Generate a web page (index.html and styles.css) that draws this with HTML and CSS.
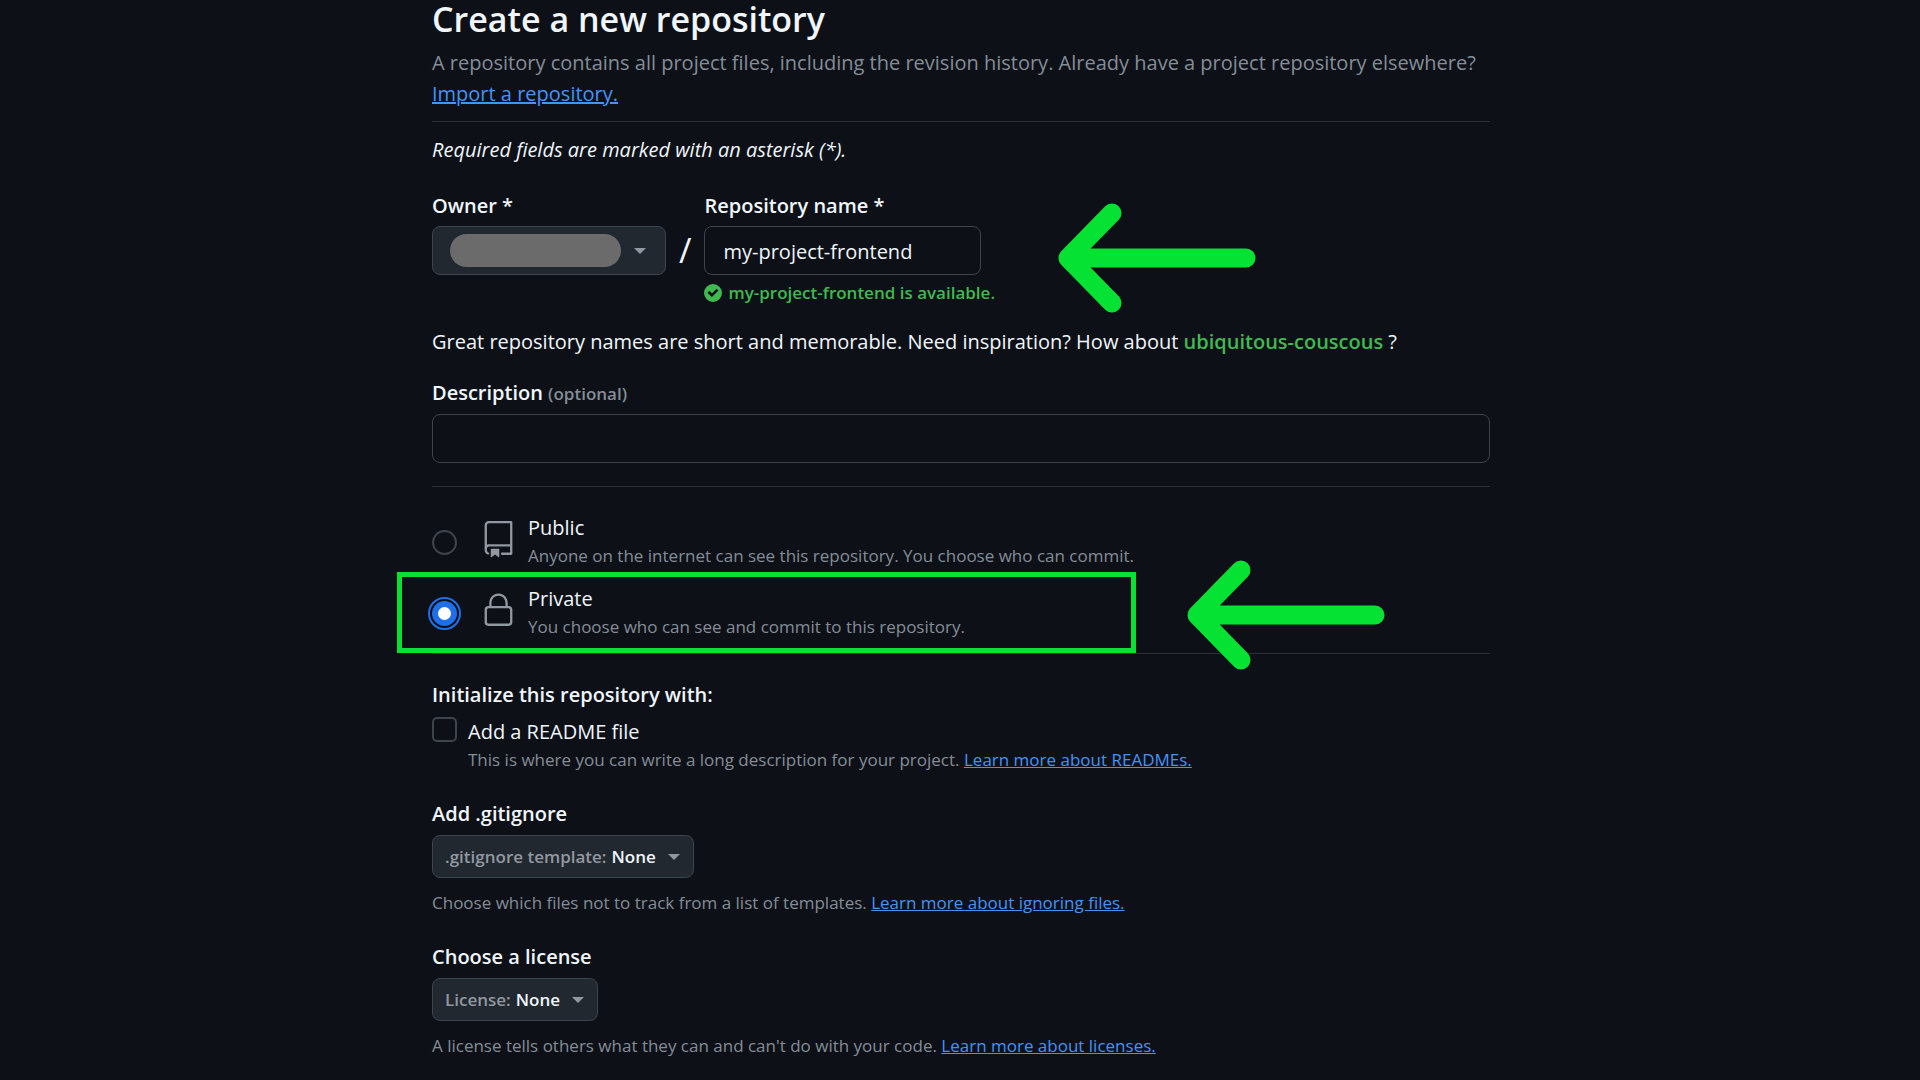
FILE: index.html
```
<!DOCTYPE html>
<html lang="en">
<head>
    <meta charset="UTF-8">
    <meta name="viewport" content="width=device-width, initial-scale=1.0">
    <title>Create a new repository</title>
    <link rel="stylesheet" href="styles.css">
</head>
<body>
    <main class="page">
        <h1>Create a new repository</h1>
        <p class="lead">A repository contains all project files, including the revision history. Already have a project repository elsewhere? <a href="#">Import a repository.</a></p>

        <hr>

        <form>
            <p class="required-note">Required fields are marked with an asterisk (*).</p>

            <div class="name-row">
                <div class="field">
                    <label class="field-label" for="owner">Owner *</label>
                    <div class="dropdown owner">
                        <select id="owner">
                            <option value=""></option>
                        </select>
                    </div>
                </div>
                <span class="slash">/</span>
                <div class="field">
                    <label class="field-label" for="repoName">Repository name *</label>
                    <input class="text-input repo-name" id="repoName" type="text" value="my-project-frontend">
                </div>
                <svg class="arrow" viewBox="0 0 198 110" aria-hidden="true">
                    <path d="M54 10 L10 55 L54 100 M10 55 H188"/>
                </svg>
                <p class="available">
                    <svg viewBox="0 0 12 12" aria-hidden="true"><path fill-rule="evenodd" d="M6 0a6 6 0 1 1 0 12A6 6 0 0 1 6 0Zm-.705 8.737L9.63 4.403 8.392 3.166 5.295 6.263l-1.7-1.702L2.356 5.8l2.938 2.938Z"/></svg>
                    my-project-frontend is available.
                </p>
            </div>

            <p class="suggestion">Great repository names are short and memorable. Need inspiration? How about <button type="button">ubiquitous-couscous</button> ?</p>

            <label class="field-label" for="description">Description <span class="optional">(optional)</span></label>
            <input class="text-input" id="description" type="text">

            <hr class="wide">

            <div class="option">
                <input type="radio" name="visibility" id="public">
                <svg class="option-icon" viewBox="0 0 24 24" aria-hidden="true"><path d="M3 2.75A2.75 2.75 0 0 1 5.75 0h14.5a.75.75 0 0 1 .75.75v20.5a.75.75 0 0 1-.75.75h-6a.75.75 0 0 1 0-1.5h5.25v-4H6A1.5 1.5 0 0 0 4.5 18v.75c0 .716.43 1.334 1.05 1.605a.75.75 0 0 1-.6 1.374A3.251 3.251 0 0 1 3 18.75ZM19.5 1.5H5.75c-.69 0-1.25.56-1.25 1.25v12.651A2.989 2.989 0 0 1 6 15h13.5Z"/><path d="M7 18.25a.25.25 0 0 1 .25-.25h5a.25.25 0 0 1 .25.25v5.01a.25.25 0 0 1-.397.201l-2.206-1.604a.25.25 0 0 0-.294 0L7.397 23.46a.25.25 0 0 1-.397-.2v-5.01Z"/></svg>
                <label for="public">Public <span class="hint">Anyone on the internet can see this repository. You choose who can commit.</span></label>
            </div>
            <div class="option highlighted">
                <input type="radio" name="visibility" id="private" checked>
                <svg class="option-icon" viewBox="0 0 24 24" aria-hidden="true"><path d="M6 9V7.25C6 3.845 8.503 1 12 1s6 2.845 6 6.25V9h.5a2.5 2.5 0 0 1 2.5 2.5v8a2.5 2.5 0 0 1-2.5 2.5h-13A2.5 2.5 0 0 1 3 19.5v-8A2.5 2.5 0 0 1 5.5 9Zm-1.5 2.5v8a1 1 0 0 0 1 1h13a1 1 0 0 0 1-1v-8a1 1 0 0 0-1-1h-13a1 1 0 0 0-1 1Zm3-4.25V9h9V7.25c0-2.67-1.922-4.75-4.5-4.75-2.578 0-4.5 2.08-4.5 4.75Z"/></svg>
                <label for="private">Private <span class="hint">You choose who can see and commit to this repository.</span></label>
                <svg class="arrow" viewBox="0 0 198 110" aria-hidden="true">
                    <path d="M54 10 L10 55 L54 100 M10 55 H188"/>
                </svg>
            </div>

            <hr class="wide flush">

            <h2>Initialize this repository with:</h2>
            <div class="check">
                <input type="checkbox" id="readme">
                <div>
                    <label for="readme">Add a README file</label>
                    <p class="hint">This is where you can write a long description for your project. <a href="#">Learn more about READMEs.</a></p>
                </div>
            </div>

            <h2>Add .gitignore</h2>
            <div class="dropdown">
                <label for="gitignore">.gitignore template:</label>
                <select id="gitignore">
                    <option>None</option>
                </select>
            </div>
            <p class="hint below">Choose which files not to track from a list of templates. <a href="#">Learn more about ignoring files.</a></p>

            <h2>Choose a license</h2>
            <div class="dropdown">
                <label for="license">License:</label>
                <select id="license">
                    <option>None</option>
                </select>
            </div>
            <p class="hint below">A license tells others what they can and can't do with your code. <a href="#">Learn more about licenses.</a></p>
        </form>
    </main>
</body>
</html>
```
FILE: styles.css
```
*,
*::before {
    box-sizing: border-box;
}

body {
    margin: 0;
    background-color: #0d1117;
    color: #f0f6fc;
    font-family: "Segoe UI", "Open Sans", "Noto Sans", sans-serif;
    font-size: 20px;
    line-height: 31px;
}

.page {
    max-width: 1060px;
    margin: 0 auto;
    padding-left: 2px;
}

h1 {
    margin: 0 0 9px;
    font-size: 34px;
    font-weight: 600;
    line-height: 38px;
}

h2 {
    margin: 25px 0 6px;
    font-size: 20px;
    font-weight: 600;
}

p {
    margin: 0;
}

a {
    color: #4493f8;
}

hr {
    height: 1px;
    margin: 12px 0;
    border: 0;
    background-color: #2a3038;
}

hr.wide {
    margin: 23px 0 26px;
}

hr.flush {
    margin: 13px 0 25px;
}

.lead {
    color: #848d97;
}

.required-note {
    margin-bottom: 25px;
    font-style: italic;
}

input,
select,
button {
    font: inherit;
    color: inherit;
}

/* owner / repository name */
.name-row {
    position: relative;
    display: grid;
    grid-template-columns: 234px auto 1fr;
    column-gap: 13px;
    margin-bottom: 20px;
}

.field-label {
    display: block;
    margin-bottom: 5px;
    font-weight: 600;
}

.optional {
    color: #848d97;
    font-size: 17px;
}

.text-input {
    display: block;
    width: 100%;
    height: 49px;
    padding: 2px 18px 0;
    border: 1px solid #3d444d;
    border-radius: 8px;
    background-color: #0d1117;
}

.repo-name {
    max-width: 277px;
}

.slash {
    align-self: end;
    font-size: 34px;
    line-height: 49px;
}

.available {
    display: flex;
    grid-column: 3;
    align-items: center;
    gap: 6px;
    margin-top: 5px;
    color: #3fb950;
    font-size: 17px;
    font-weight: 600;
    line-height: 26px;
}

.available svg {
    width: 18px;
    height: 18px;
    fill: #3fb950;
}

.suggestion {
    margin-bottom: 20px;
}

.suggestion button {
    padding: 0;
    border: 0;
    background: none;
    color: #3fb950;
    font-weight: 600;
}

/* drop-downs */
.dropdown {
    display: inline-flex;
    position: relative;
    align-items: center;
    gap: 5px;
    height: 43px;
    padding: 0 12px;
    border: 1px solid #3d444d;
    border-radius: 8px;
    background-color: #212830;
    color: #9198a1;
    font-size: 17px;
    font-weight: 600;
}

.dropdown select {
    margin-right: 24px;
    padding: 0;
    border: 0;
    appearance: none;
    background: none;
    color: #f0f6fc;
}

.dropdown::after {
    content: "";
    position: absolute;
    right: 13px;
    border: 6px solid transparent;
    border-top-color: #9198a1;
    border-bottom: 0;
}

.owner {
    display: flex;
    height: 49px;
    padding: 0 17px;
}

.owner::after {
    right: 19px;
}

.dropdown.owner select {
    width: 171px;
    height: 33px;
    border-radius: 17px;
    background-color: #6b6b6b;
}

/* visibility */
.option {
    display: flex;
    position: relative;
    align-items: center;
    margin-bottom: 15px;
    line-height: 30px;
}

.option input {
    flex: none;
    width: 25px;
    height: 25px;
    margin: 3px 23px 0 0;
    border: 2px solid #3d444d;
    border-radius: 50%;
    appearance: none;
}

.option input:checked {
    border: 6px solid #1f6feb;
    background-color: #fff;
    outline: 2px solid #1f6feb;
    outline-offset: 2px;
}

.option-icon {
    flex: none;
    width: 37px;
    height: 37px;
    margin: 0 11px 4px 0;
    fill: #9198a1;
}

.hint {
    display: block;
    color: #848d97;
    font-size: 17px;
    line-height: 26px;
}

.highlighted {
    margin-bottom: 0;
}

.highlighted::before {
    content: "";
    position: absolute;
    z-index: 1;
    inset: -12px auto -13px -35px;
    width: 739px;
    border: 5px solid #05e233;
    pointer-events: none;
}

/* pointer arrows drawn over the form */
.arrow {
    position: absolute;
    z-index: 1;
    top: 13px;
    left: 626px;
    width: 198px;
    height: 110px;
    fill: none;
    stroke: #05e233;
    stroke-width: 19px;
    stroke-linecap: round;
    stroke-linejoin: round;
}

.highlighted .arrow {
    top: -24px;
    left: 755px;
}

.check {
    display: flex;
    gap: 11px;
}

.check input {
    flex: none;
    width: 25px;
    height: 25px;
    margin: 1px 0 0;
    border: 2px solid #3d444d;
    border-radius: 5px;
    appearance: none;
}

.check label {
    display: block;
}

.below {
    margin-top: 12px;
}
```
